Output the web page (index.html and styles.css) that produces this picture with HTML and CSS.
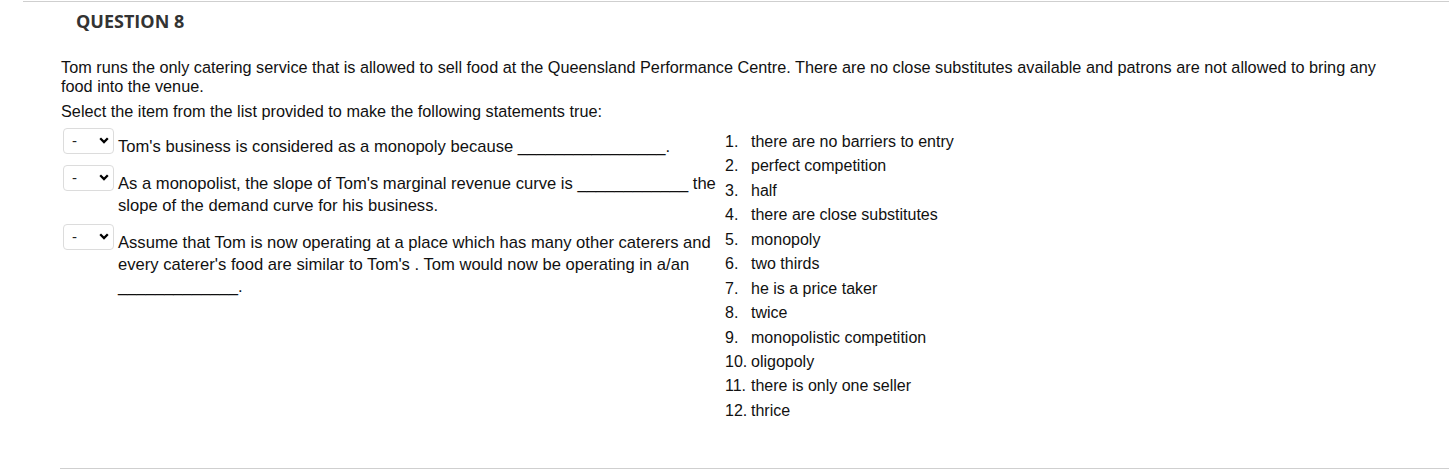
FILE: index.html
```html
<!DOCTYPE html>
<html lang="en">
<head>
<meta charset="utf-8">
<title>Question 8</title>
<link rel="stylesheet" href="styles.css">
</head>
<body>
<div class="question">
  <div class="qhead">
    <h2 class="qtitle">QUESTION 8</h2>
  </div>
  <div class="qbody">
    <p class="stem">Tom runs the only catering service that is allowed to sell food at the Queensland Performance Centre. There are no close substitutes available and patrons are not allowed to bring any food into the venue.</p>
    <p class="instr">Select the item from the list provided to make the following statements true:</p>
    <div class="match">
      <div class="statements">
        <div class="stmt">
          <span class="dropdown"><span class="dash">-</span><svg class="chev" width="10" height="7" viewBox="0 0 10 7"><polyline points="1.2,1.2 5,5 8.8,1.2" fill="none" stroke="#000" stroke-width="2.3"/></svg></span>
          <div class="stext">Tom's business is considered as a monopoly because ________________.</div>
        </div>
        <div class="stmt">
          <span class="dropdown"><span class="dash">-</span><svg class="chev" width="10" height="7" viewBox="0 0 10 7"><polyline points="1.2,1.2 5,5 8.8,1.2" fill="none" stroke="#000" stroke-width="2.3"/></svg></span>
          <div class="stext">As a monopolist, the slope of Tom's marginal revenue curve is ____________ the slope of the demand curve for his business.</div>
        </div>
        <div class="stmt">
          <span class="dropdown"><span class="dash">-</span><svg class="chev" width="10" height="7" viewBox="0 0 10 7"><polyline points="1.2,1.2 5,5 8.8,1.2" fill="none" stroke="#000" stroke-width="2.3"/></svg></span>
          <div class="stext">Assume that Tom is now operating at a place which has many other caterers and every caterer's food are similar to Tom's . Tom would now be operating in a/an _____________.</div>
        </div>
      </div>
      <ol class="options">
        <li><span class="num">1.</span><span>there are no barriers to entry</span></li>
        <li><span class="num">2.</span><span>perfect competition</span></li>
        <li><span class="num">3.</span><span>half</span></li>
        <li><span class="num">4.</span><span>there are close substitutes</span></li>
        <li><span class="num">5.</span><span>monopoly</span></li>
        <li><span class="num">6.</span><span>two thirds</span></li>
        <li><span class="num">7.</span><span>he is a price taker</span></li>
        <li><span class="num">8.</span><span>twice</span></li>
        <li><span class="num">9.</span><span>monopolistic competition</span></li>
        <li><span class="num">10.</span><span>oligopoly</span></li>
        <li><span class="num">11.</span><span>there is only one seller</span></li>
        <li><span class="num">12.</span><span>thrice</span></li>
      </ol>
    </div>
  </div>
  <div class="bottom-rule"></div>
</div>
</body>
</html>
```

FILE: styles.css
```css
html, body {
  margin: 0;
  padding: 0;
  background: #fff;
}
body {
  padding-top: 1px;
  font-family: "Liberation Sans", Arial, sans-serif;
  color: #111;
}
.qhead {
  margin-left: 23px;
  border-top: 1px solid #cfcfcf;
}
.qtitle {
  margin: 7px 0 0 53px;
  font-family: "Open Sans", sans-serif;
  font-weight: 700;
  font-size: 18px;
  line-height: 24px;
  color: #333;
}
.qbody {
  margin: 0 54px 0 61px;
}
.stem {
  margin: 25px 0 0;
  font-size: 16.25px;
  line-height: 19px;
}
.instr {
  margin: 6px 0 0;
  font-size: 16.25px;
  line-height: 19px;
}
.match {
  display: flex;
  align-items: flex-start;
  margin-top: 7px;
}
.statements {
  display: flex;
  flex-direction: column;
  gap: 7px;
  width: 664px;
}
.stmt {
  display: flex;
  align-items: flex-start;
  gap: 4px;
}
.dropdown {
  flex: none;
  box-sizing: border-box;
  width: 51px;
  height: 26px;
  margin-left: 2px;
  border: 1px solid #dcdcdc;
  border-radius: 4px;
  display: flex;
  align-items: center;
  justify-content: space-between;
  padding: 0 4px 0 8px;
  font-size: 15px;
  color: #222;
}
.dash {
  line-height: 1;
  margin-top: -2px;
}
.chev {
  display: block;
  margin-top: -2px;
}
.stext {
  padding-top: 8px;
  font-size: 16.6px;
  line-height: 22px;
  width: 607px;
}
.options {
  list-style: none;
  margin: 2px 0 0;
  padding: 0 0 0 0;
  font-size: 16px;
  line-height: 24.43px;
}
.options li {
  display: grid;
  grid-template-columns: 26px auto;
}
.bottom-rule {
  margin: 45px 0 0 60px;
  border-top: 1px solid #cfcfcf;
}
```
